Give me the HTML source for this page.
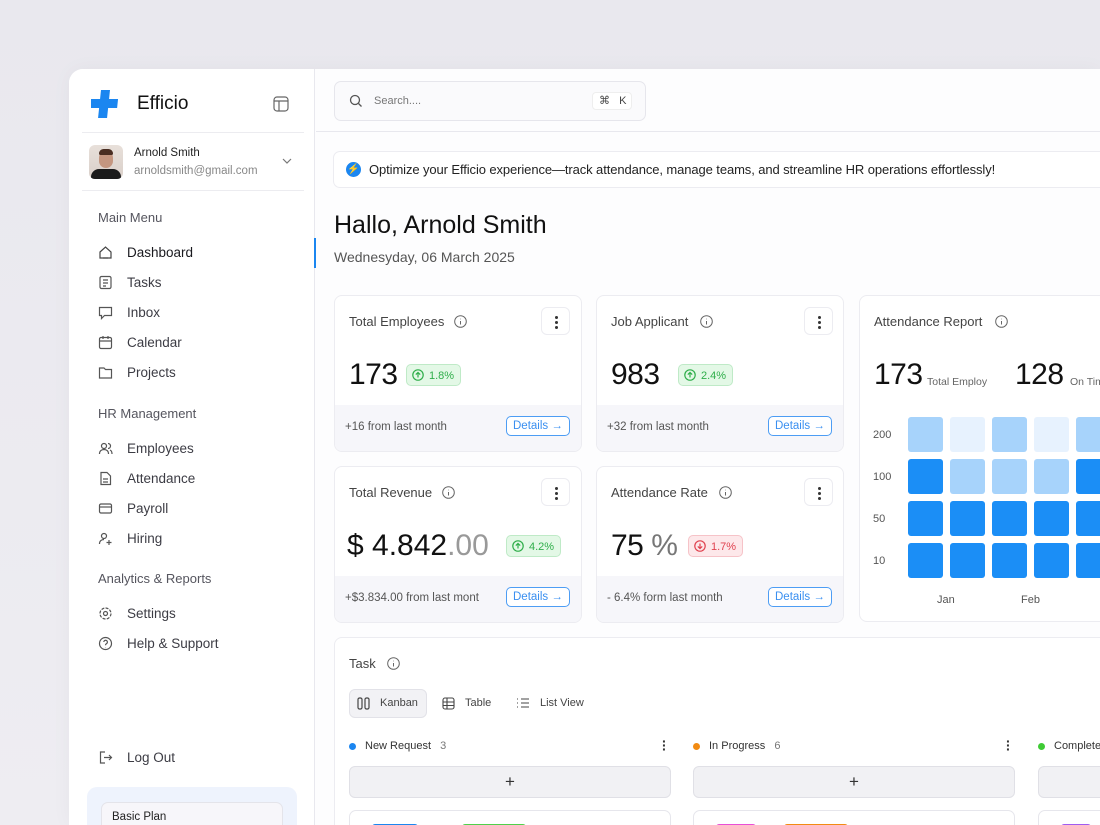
<!DOCTYPE html>
<html><head><meta charset="utf-8"><style>
*{box-sizing:border-box;margin:0;padding:0}
html,body{width:1100px;height:825px;overflow:hidden}
body{background:linear-gradient(180deg,#e9e8ee,#eeedf2);font-family:"Liberation Sans",sans-serif;color:#1a1a1f;position:relative}
.a{position:absolute}
.app{left:69px;top:69px;width:1031px;height:756px;background:#fdfdfe;border-radius:14px 0 0 0;overflow:hidden;box-shadow:0 0 20px rgba(0,0,0,.04)}
.side{left:0;top:0;width:246px;height:756px;background:#fff;border-right:1px solid #e8e8ee}
.nav{font-size:13.5px;color:#3c3c44}
.nav svg{position:absolute;left:0;top:0}
.sec{font-size:13px;color:#55555e}
.card{background:#fff;border:1px solid #ececf1;border-radius:8px;overflow:hidden}
.foot{background:#f6f6fa;position:absolute;left:0;right:0;bottom:0;height:46px}
.det{position:absolute;border:1px solid #4d9df4;color:#3a8ff0;border-radius:5px;font-size:11.5px;padding:3px 6px;background:#fff}
.dots{position:absolute;width:29px;height:28px;border:1px solid #ececf1;border-radius:6px;background:#fff}
.dots i{position:absolute;left:13px;width:3px;height:3px;border-radius:2px;background:#333}
.badge{position:absolute;border-radius:5px;font-size:11px;padding:3px 6px 3px 22px;height:22px;line-height:16px}
.hm{position:absolute;width:35px;height:35px;border-radius:3px}
.d{background:#1b8ef6}.l{background:#a7d3fb}.v{background:#e7f2fe}
.big{position:absolute;font-size:30px;color:#111;letter-spacing:-0.5px}
</style></head><body>
<div class="a app">
 <div class="a side">
  <svg class="a" style="left:22px;top:21px" width="30" height="28" viewBox="0 0 30 28"><path d="M10 0h9v9h9v9h-9v10h-9v-10H1v-9h9z" fill="#1b86f0" transform="skewX(-6)"/></svg>
  <div class="a" style="left:68px;top:24px;font-size:19px;color:#111">Efficio</div>
  <svg class="a" style="left:204px;top:27px" width="16" height="16" viewBox="0 0 16 16" fill="none" stroke="#666" stroke-width="1.2"><rect x="1" y="1" width="14" height="14" rx="3"/><path d="M1 5h14M6 5v10"/></svg>
  <div class="a" style="left:13px;top:63px;width:222px;height:1px;background:#ececf0"></div>
  <div class="a" style="left:20px;top:76px;width:34px;height:34px;border-radius:6px;background:linear-gradient(#e8e0da,#d9cfc9);overflow:hidden"><div class="a" style="left:10px;top:6px;width:14px;height:17px;border-radius:7px;background:#c49680"></div><div class="a" style="left:2px;top:24px;width:30px;height:14px;border-radius:8px 8px 0 0;background:#1b1b1b"></div><div class="a" style="left:10px;top:4px;width:14px;height:6px;border-radius:6px 6px 2px 2px;background:#4a2e22"></div></div>
  <div class="a" style="left:65px;top:78px;font-size:11.5px;color:#222">Arnold Smith</div>
  <div class="a" style="left:65px;top:96px;font-size:11.5px;color:#888">arnoldsmith@gmail.com</div>
  <svg class="a" style="left:212px;top:88px" width="12" height="8" viewBox="0 0 12 8" fill="none" stroke="#777" stroke-width="1.2"><path d="M2 2l4 4 4-4"/></svg>
  <div class="a" style="left:13px;top:121px;width:222px;height:1px;background:#ececf0"></div>
  <div class="a sec" style="left:29px;top:141px">Main Menu</div>
  <div class="a nav" style="left:29px;top:176px;width:200px;height:20px"><svg width="15" height="15" viewBox="0 0 15 15" fill="none" stroke="#444" stroke-width="1.2"><path d="M2 7l5.5-5 5.5 5v6H2z"/><path d="M5 13h5"/></svg><span style="position:absolute;left:29px;color:#1a1a1f">Dashboard</span></div>
  <div class="a nav" style="left:29px;top:206px;width:200px;height:20px"><svg width="15" height="15" viewBox="0 0 15 15" fill="none" stroke="#555" stroke-width="1.2"><rect x="2" y="1.5" width="11" height="12" rx="1.5"/><path d="M5 5h5M5 8h5M5 11h3"/></svg><span style="position:absolute;left:29px">Tasks</span></div>
  <div class="a nav" style="left:29px;top:236px;width:200px;height:20px"><svg width="15" height="15" viewBox="0 0 15 15" fill="none" stroke="#555" stroke-width="1.2"><path d="M1.5 2.5h12v8h-7l-3 3v-3h-2z"/></svg><span style="position:absolute;left:29px">Inbox</span></div>
  <div class="a nav" style="left:29px;top:266px;width:200px;height:20px"><svg width="15" height="15" viewBox="0 0 15 15" fill="none" stroke="#555" stroke-width="1.2"><rect x="1.5" y="2.5" width="12" height="11" rx="1.5"/><path d="M1.5 6h12M5 1v3M10 1v3"/></svg><span style="position:absolute;left:29px">Calendar</span></div>
  <div class="a nav" style="left:29px;top:296px;width:200px;height:20px"><svg width="15" height="15" viewBox="0 0 15 15" fill="none" stroke="#555" stroke-width="1.2"><path d="M1.5 3h4.5l1.5 1.5h6v8.5h-12z"/></svg><span style="position:absolute;left:29px">Projects</span></div>
  <div class="a sec" style="left:29px;top:337px">HR Management</div>
  <div class="a nav" style="left:29px;top:372px;width:200px;height:20px"><svg width="15" height="15" viewBox="0 0 15 15" fill="none" stroke="#555" stroke-width="1.2"><circle cx="6" cy="5" r="2.5"/><path d="M1.5 13c0-3 2-4.5 4.5-4.5s4.5 1.5 4.5 4.5M10 2.5a2.5 2.5 0 010 5M12 9c1.5.6 2 2 2 4"/></svg><span style="position:absolute;left:29px">Employees</span></div>
  <div class="a nav" style="left:29px;top:402px;width:200px;height:20px"><svg width="15" height="15" viewBox="0 0 15 15" fill="none" stroke="#555" stroke-width="1.2"><path d="M3 1.5h6l3.5 3.5v8.5H3z"/><path d="M5 8h5M5 11h5"/></svg><span style="position:absolute;left:29px">Attendance</span></div>
  <div class="a nav" style="left:29px;top:432px;width:200px;height:20px"><svg width="15" height="15" viewBox="0 0 15 15" fill="none" stroke="#555" stroke-width="1.2"><rect x="1.5" y="3" width="12" height="9" rx="1.5"/><path d="M1.5 6h12"/></svg><span style="position:absolute;left:29px">Payroll</span></div>
  <div class="a nav" style="left:29px;top:462px;width:200px;height:20px"><svg width="15" height="15" viewBox="0 0 15 15" fill="none" stroke="#555" stroke-width="1.2"><circle cx="6" cy="5" r="2.5"/><path d="M1.5 13c0-3 2-4.5 4.5-4.5M11 9v5M8.5 11.5h5"/></svg><span style="position:absolute;left:29px">Hiring</span></div>
  <div class="a sec" style="left:29px;top:502px">Analytics &amp; Reports</div>
  <div class="a nav" style="left:29px;top:537px;width:200px;height:20px"><svg width="15" height="15" viewBox="0 0 15 15" fill="none" stroke="#555" stroke-width="1.2"><circle cx="7.5" cy="7.5" r="2"/><circle cx="7.5" cy="7.5" r="5.5" stroke-dasharray="3 1.3"/></svg><span style="position:absolute;left:29px">Settings</span></div>
  <div class="a nav" style="left:29px;top:567px;width:200px;height:20px"><svg width="15" height="15" viewBox="0 0 15 15" fill="none" stroke="#555" stroke-width="1.2"><circle cx="7.5" cy="7.5" r="6"/><path d="M5.8 6a1.8 1.8 0 113 1.4c-.8.5-1.3.8-1.3 1.8M7.5 11v.3"/></svg><span style="position:absolute;left:29px">Help &amp; Support</span></div>
  <div class="a nav" style="left:29px;top:681px;width:200px;height:20px"><svg width="15" height="15" viewBox="0 0 15 15" fill="none" stroke="#555" stroke-width="1.2"><path d="M7 2H2.5v11H7M6 7.5h7.5M11 5l2.5 2.5L11 10"/></svg><span style="position:absolute;left:29px">Log Out</span></div>
  <div class="a" style="left:18px;top:718px;width:210px;height:100px;border-radius:10px;background:#eef3fd"></div>
  <div class="a" style="left:32px;top:733px;width:182px;height:80px;border-radius:7px;background:#f7f6fa;border:1px solid #e4e4ea"></div>
  <div class="a" style="left:43px;top:742px;font-size:11.5px;color:#222">Basic Plan</div>
 </div>
 <div class="a" style="left:245px;top:169px;width:2px;height:30px;background:#1b86f0"></div>
 <div class="a" style="left:247px;top:62px;width:860px;height:1px;background:#e8e8ee"></div>
 <div class="a" style="left:265px;top:12px;width:312px;height:40px;border:1px solid #e6e6ec;border-radius:7px;background:#fafafc"></div>
 <svg class="a" style="left:280px;top:25px" width="14" height="14" viewBox="0 0 14 14" fill="none" stroke="#555" stroke-width="1.3"><circle cx="6" cy="6" r="4.5"/><path d="M9.5 9.5l3 3"/></svg>
 <div class="a" style="left:305px;top:26px;font-size:11px;color:#777">Search....</div>
 <div class="a" style="left:523px;top:23px;width:40px;height:18px;border:1px solid #eee;border-radius:4px;background:#fff;font-size:11px;color:#444;padding:1px 0 0 6px">⌘ &nbsp; K</div>
 <div class="a" style="left:264px;top:82px;width:850px;height:37px;border:1px solid #ececf1;border-radius:7px;background:#fff"></div>
 <div class="a" style="left:277px;top:93px;width:15px;height:15px;border-radius:50%;background:#1b86f0;color:#fff;font-size:10px;text-align:center;line-height:15px">⚡</div>
 <div class="a" style="left:300px;top:93px;font-size:13px;color:#222;white-space:nowrap;letter-spacing:-0.1px">Optimize your Efficio experience—track attendance, manage teams, and streamline HR operations effortlessly!</div>
 <div class="a" style="left:265px;top:142px;font-size:25px;color:#111">Hallo, Arnold Smith</div>
 <div class="a" style="left:265px;top:180px;font-size:14px;color:#555">Wednesyday, 06 March 2025</div>

 <div class="a card" style="left:265px;top:226px;width:248px;height:157px">
  <div class="a" style="left:14px;top:18px;font-size:13px;color:#444">Total Employees</div>
  <svg class="a" style="left:119px;top:19px" width="13" height="13" viewBox="0 0 13 13" fill="none" stroke="#666"><circle cx="6.5" cy="6.5" r="5.8"/><path d="M6.5 6v3.5M6.5 3.8v.5"/></svg>
  <div class="dots" style="left:206px;top:11px"><i style="top:8px"></i><i style="top:13px"></i><i style="top:18px"></i></div>
  <div class="big" style="left:14px;top:62px">173</div>
  <div class="badge" style="left:71px;top:68px;background:#e3f8e6;border:1px solid #bfeac7;color:#2fae4a">1.8%</div>
  <svg class="a" style="left:77px;top:73px" width="12" height="12" viewBox="0 0 12 12" fill="none" stroke="#2fae4a" stroke-width="1.2"><circle cx="6" cy="6" r="5.2"/><path d="M6 8.5V3.5M3.8 5.6L6 3.5l2.2 2.1"/></svg>
  <div class="foot"><div class="a" style="left:10px;top:16px;font-size:11.5px;color:#555">+16 from last month</div><div class="det" style="left:171px;top:11px">Details →</div></div>
 </div>
 <div class="a card" style="left:527px;top:226px;width:248px;height:157px">
  <div class="a" style="left:14px;top:18px;font-size:13px;color:#444">Job Applicant</div>
  <svg class="a" style="left:103px;top:19px" width="13" height="13" viewBox="0 0 13 13" fill="none" stroke="#666"><circle cx="6.5" cy="6.5" r="5.8"/><path d="M6.5 6v3.5M6.5 3.8v.5"/></svg>
  <div class="dots" style="left:207px;top:11px"><i style="top:8px"></i><i style="top:13px"></i><i style="top:18px"></i></div>
  <div class="big" style="left:14px;top:62px">983</div>
  <div class="badge" style="left:81px;top:68px;background:#e3f8e6;border:1px solid #bfeac7;color:#2fae4a">2.4%</div>
  <svg class="a" style="left:87px;top:73px" width="12" height="12" viewBox="0 0 12 12" fill="none" stroke="#2fae4a" stroke-width="1.2"><circle cx="6" cy="6" r="5.2"/><path d="M6 8.5V3.5M3.8 5.6L6 3.5l2.2 2.1"/></svg>
  <div class="foot"><div class="a" style="left:10px;top:16px;font-size:11.5px;color:#555">+32 from last month</div><div class="det" style="left:171px;top:11px">Details →</div></div>
 </div>
 <div class="a card" style="left:265px;top:397px;width:248px;height:157px">
  <div class="a" style="left:14px;top:18px;font-size:13px;color:#444">Total Revenue</div>
  <svg class="a" style="left:107px;top:19px" width="13" height="13" viewBox="0 0 13 13" fill="none" stroke="#666"><circle cx="6.5" cy="6.5" r="5.8"/><path d="M6.5 6v3.5M6.5 3.8v.5"/></svg>
  <div class="dots" style="left:206px;top:11px"><i style="top:8px"></i><i style="top:13px"></i><i style="top:18px"></i></div>
  <div class="big" style="left:12px;top:62px;white-space:nowrap;letter-spacing:0px">$ 4.842<span style="color:#999">.00</span></div>
  <div class="badge" style="left:171px;top:68px;background:#e3f8e6;border:1px solid #bfeac7;color:#2fae4a">4.2%</div>
  <svg class="a" style="left:177px;top:73px" width="12" height="12" viewBox="0 0 12 12" fill="none" stroke="#2fae4a" stroke-width="1.2"><circle cx="6" cy="6" r="5.2"/><path d="M6 8.5V3.5M3.8 5.6L6 3.5l2.2 2.1"/></svg>
  <div class="foot"><div class="a" style="left:10px;top:16px;font-size:11.5px;color:#555;white-space:nowrap">+$3.834.00 from last mont</div><div class="det" style="left:171px;top:11px">Details →</div></div>
 </div>
 <div class="a card" style="left:527px;top:397px;width:248px;height:157px">
  <div class="a" style="left:14px;top:18px;font-size:13px;color:#444">Attendance Rate</div>
  <svg class="a" style="left:122px;top:19px" width="13" height="13" viewBox="0 0 13 13" fill="none" stroke="#666"><circle cx="6.5" cy="6.5" r="5.8"/><path d="M6.5 6v3.5M6.5 3.8v.5"/></svg>
  <div class="dots" style="left:207px;top:11px"><i style="top:8px"></i><i style="top:13px"></i><i style="top:18px"></i></div>
  <div class="big" style="left:14px;top:62px">75 <span style="color:#777">%</span></div>
  <div class="badge" style="left:91px;top:68px;background:#fde8ea;border:1px solid #f6c3c8;color:#e0424f">1.7%</div>
  <svg class="a" style="left:97px;top:73px" width="12" height="12" viewBox="0 0 12 12" fill="none" stroke="#e0424f" stroke-width="1.2"><circle cx="6" cy="6" r="5.2"/><path d="M6 3.5v5M3.8 6.4L6 8.5l2.2-2.1"/></svg>
  <div class="foot"><div class="a" style="left:10px;top:16px;font-size:11.5px;color:#555">- 6.4% form last month</div><div class="det" style="left:171px;top:11px">Details →</div></div>
 </div>
 <div class="a card" style="left:790px;top:226px;width:300px;height:327px">
  <div class="a" style="left:14px;top:18px;font-size:13px;color:#444;white-space:nowrap">Attendance Report</div>
  <svg class="a" style="left:135px;top:19px" width="13" height="13" viewBox="0 0 13 13" fill="none" stroke="#666"><circle cx="6.5" cy="6.5" r="5.8"/><path d="M6.5 6v3.5M6.5 3.8v.5"/></svg>
  <div class="big" style="left:14px;top:62px">173</div>
  <div class="a" style="left:67px;top:80px;font-size:10.5px;color:#666;white-space:nowrap">Total Employ</div>
  <div class="big" style="left:155px;top:62px">128</div>
  <div class="a" style="left:210px;top:80px;font-size:10.5px;color:#666;white-space:nowrap">On Time</div>
  <div class="a" style="left:13px;top:133px;font-size:11px;color:#555">200</div>
  <div class="a" style="left:13px;top:175px;font-size:11px;color:#555">100</div>
  <div class="a" style="left:13px;top:217px;font-size:11px;color:#555">50</div>
  <div class="a" style="left:13px;top:259px;font-size:11px;color:#555">10</div>
  <div class="hm l" style="left:48px;top:121px"></div><div class="hm v" style="left:90px;top:121px"></div><div class="hm l" style="left:132px;top:121px"></div><div class="hm v" style="left:174px;top:121px"></div><div class="hm l" style="left:216px;top:121px"></div>
  <div class="hm d" style="left:48px;top:163px"></div><div class="hm l" style="left:90px;top:163px"></div><div class="hm l" style="left:132px;top:163px"></div><div class="hm l" style="left:174px;top:163px"></div><div class="hm d" style="left:216px;top:163px"></div>
  <div class="hm d" style="left:48px;top:205px"></div><div class="hm d" style="left:90px;top:205px"></div><div class="hm d" style="left:132px;top:205px"></div><div class="hm d" style="left:174px;top:205px"></div><div class="hm d" style="left:216px;top:205px"></div>
  <div class="hm d" style="left:48px;top:247px"></div><div class="hm d" style="left:90px;top:247px"></div><div class="hm d" style="left:132px;top:247px"></div><div class="hm d" style="left:174px;top:247px"></div><div class="hm d" style="left:216px;top:247px"></div>
  <div class="a" style="left:77px;top:298px;font-size:11px;color:#555">Jan</div>
  <div class="a" style="left:161px;top:298px;font-size:11px;color:#555">Feb</div>
 </div>

 <div class="a card" style="left:265px;top:568px;width:850px;height:260px">
  <div class="a" style="left:14px;top:18px;font-size:13px;color:#444">Task</div>
  <svg class="a" style="left:52px;top:19px" width="13" height="13" viewBox="0 0 13 13" fill="none" stroke="#666"><circle cx="6.5" cy="6.5" r="5.8"/><path d="M6.5 6v3.5M6.5 3.8v.5"/></svg>
  <div class="a" style="left:14px;top:51px;width:78px;height:29px;border:1px solid #e2e2e8;border-radius:6px;background:#f2f2f5"></div>
  <svg class="a" style="left:22px;top:59px" width="14" height="13" viewBox="0 0 14 13" fill="none" stroke="#444" stroke-width="1.2"><rect x="1" y="1" width="4" height="11" rx="1.5"/><rect x="8" y="1" width="4" height="11" rx="1.5"/></svg>
  <div class="a" style="left:45px;top:59px;font-size:11px;color:#444">Kanban</div>
  <svg class="a" style="left:107px;top:59px" width="13" height="13" viewBox="0 0 13 13" fill="none" stroke="#444" stroke-width="1.1"><rect x="1" y="1" width="11" height="11" rx="2"/><path d="M1 5h11M1 8.5h11M5 1v11"/></svg>
  <div class="a" style="left:130px;top:59px;font-size:11px;color:#444">Table</div>
  <svg class="a" style="left:181px;top:59px" width="14" height="13" viewBox="0 0 14 13" fill="none" stroke="#444" stroke-width="1.1"><path d="M1 2h1M1 6h1M1 10h1M5 2h8M5 6h8M5 10h8"/></svg>
  <div class="a" style="left:205px;top:59px;font-size:11px;color:#444">List View</div>
  <div class="a" style="left:14px;top:105px;width:7px;height:7px;border-radius:50%;background:#1b86f0"></div>
  <div class="a" style="left:30px;top:102px;font-size:11px;color:#333">New Request <span style="color:#777;margin-left:6px">3</span></div>
  <div class="a" style="left:327px;top:101px;font-size:14px;font-weight:bold;color:#333;line-height:4px">·<br>·<br>·</div>
  <div class="a" style="left:358px;top:105px;width:7px;height:7px;border-radius:50%;background:#f28b13"></div>
  <div class="a" style="left:374px;top:102px;font-size:11px;color:#333">In Progress <span style="color:#777;margin-left:6px">6</span></div>
  <div class="a" style="left:671px;top:101px;font-size:14px;font-weight:bold;color:#333;line-height:4px">·<br>·<br>·</div>
  <div class="a" style="left:703px;top:105px;width:7px;height:7px;border-radius:50%;background:#3fcb35"></div>
  <div class="a" style="left:719px;top:102px;font-size:11px;color:#333">Completed</div>
  <div class="a" style="left:14px;top:128px;width:322px;height:32px;border:1px solid #e0e0e6;border-radius:6px;background:#f1f1f4;text-align:center;font-size:17px;line-height:30px;color:#333">+</div>
  <div class="a" style="left:358px;top:128px;width:322px;height:32px;border:1px solid #e0e0e6;border-radius:6px;background:#f1f1f4;text-align:center;font-size:17px;line-height:30px;color:#333">+</div>
  <div class="a" style="left:703px;top:128px;width:200px;height:32px;border:1px solid #e0e0e6;border-radius:6px;background:#f1f1f4"></div>
  <div class="a" style="left:14px;top:172px;width:322px;height:40px;border:1px solid #e6e6ec;border-radius:7px;background:#fff"><div class="a" style="left:22px;top:13px;width:46px;height:6px;border-radius:3px;background:#1b86f0"></div><div class="a" style="left:112px;top:13px;width:64px;height:6px;border-radius:3px;background:#4fd14a"></div></div>
  <div class="a" style="left:358px;top:172px;width:322px;height:40px;border:1px solid #e6e6ec;border-radius:7px;background:#fff"><div class="a" style="left:22px;top:13px;width:40px;height:6px;border-radius:3px;background:#e94fd6"></div><div class="a" style="left:90px;top:13px;width:64px;height:6px;border-radius:3px;background:#f28b13"></div></div>
  <div class="a" style="left:703px;top:172px;width:200px;height:40px;border:1px solid #e6e6ec;border-radius:7px;background:#fff"><div class="a" style="left:22px;top:13px;width:30px;height:6px;border-radius:3px;background:#a05cf0"></div></div>
 </div>
</div>
</body></html>
